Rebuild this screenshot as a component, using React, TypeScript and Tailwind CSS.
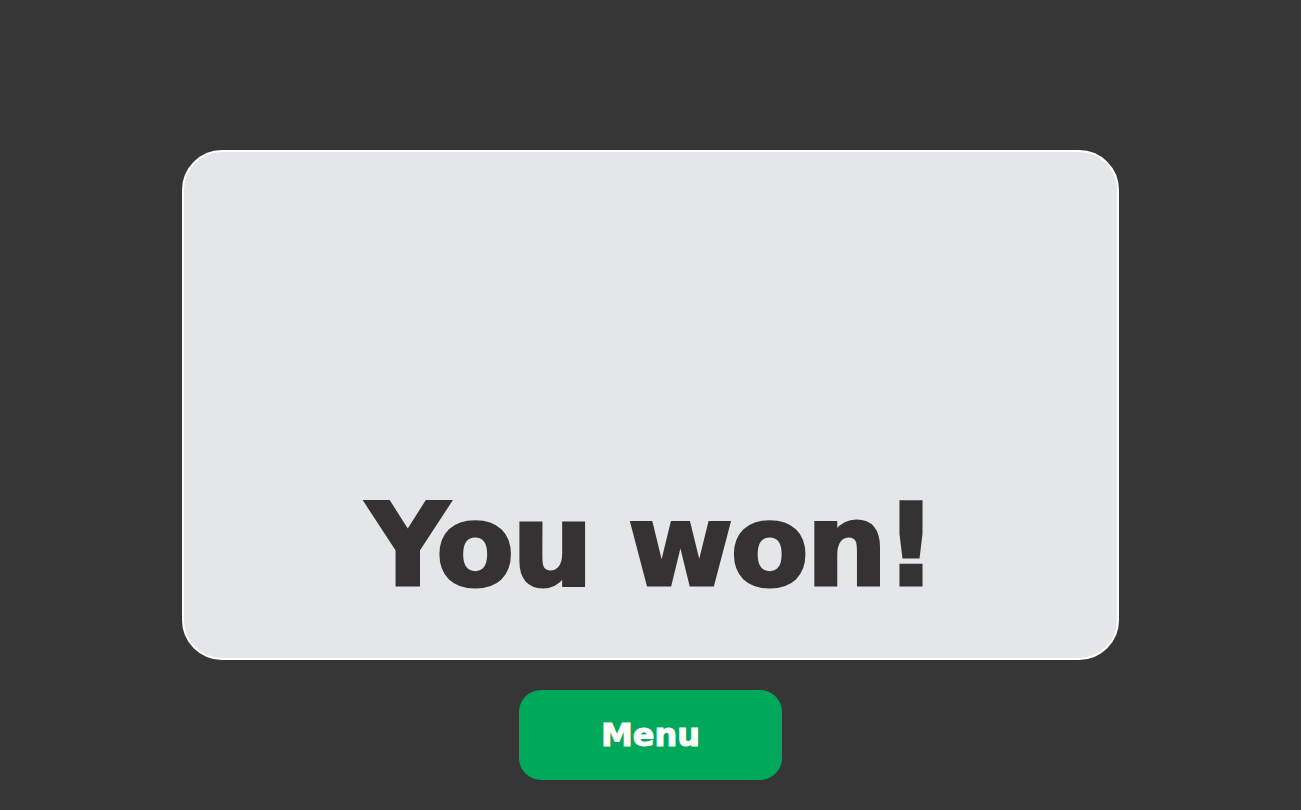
const App: React.FC = () => {
  return (
    <div className="flex h-[810px] w-full flex-col items-center bg-[#363636] pt-[150px] font-['DejaVu_Sans',sans-serif]">
      <div className="flex h-[510px] w-[937px] flex-col items-center justify-end rounded-[40px] border-2 border-white bg-[#e5e6e8] pb-[55px]">
        <h1 className="text-[114px] font-bold leading-none tracking-[-0.022em] text-[#353234] [-webkit-text-stroke:3px_#353234]">
          You won!
        </h1>
      </div>
      <button className="mt-[30px] flex h-[90px] w-[263px] items-center justify-center rounded-[22px] bg-[#00a85a] text-[32px] font-bold text-white [-webkit-text-stroke:1px_#ffffff]">
        Menu
      </button>
    </div>
  );
};

export default App;
